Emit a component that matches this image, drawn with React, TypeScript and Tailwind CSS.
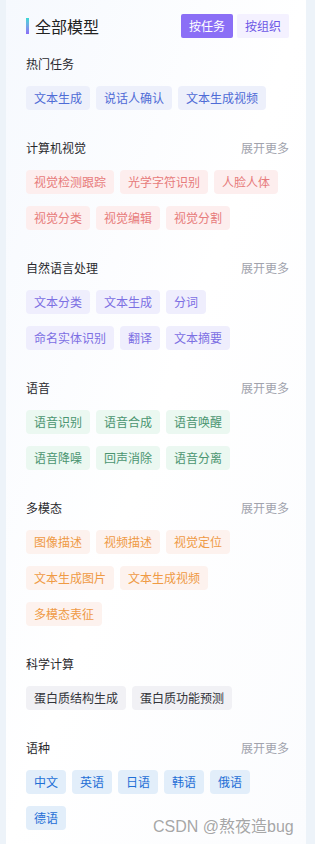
import React from 'react'

type Section = {
  title: string
  more?: boolean
  tone: string
  tags: string[]
}

// 분류별 태그 색상
const sections: Section[] = [
  { title: '热门任务', tone: 'bg-[#edf0fb] text-[#4f6bd6]', tags: ['文本生成', '说话人确认', '文本生成视频'] },
  {
    title: '计算机视觉',
    more: true,
    tone: 'bg-[#fdeeee] text-[#e77b7b]',
    tags: ['视觉检测跟踪', '光学字符识别', '人脸人体', '视觉分类', '视觉编辑', '视觉分割'],
  },
  {
    title: '自然语言处理',
    more: true,
    tone: 'bg-[#efeefd] text-[#7c6fe3]',
    tags: ['文本分类', '文本生成', '分词', '命名实体识别', '翻译', '文本摘要'],
  },
  {
    title: '语音',
    more: true,
    tone: 'bg-[#ebf8f1] text-[#4a9570]',
    tags: ['语音识别', '语音合成', '语音唤醒', '语音降噪', '回声消除', '语音分离'],
  },
  {
    title: '多模态',
    more: true,
    tone: 'bg-[#fdf2ee] text-[#ef9a45]',
    tags: ['图像描述', '视频描述', '视觉定位', '文本生成图片', '文本生成视频', '多模态表征'],
  },
  { title: '科学计算', tone: 'bg-[#f1f1f5] text-[#33343a]', tags: ['蛋白质结构生成', '蛋白质功能预测'] },
  {
    title: '语种',
    more: true,
    tone: 'bg-[#e2eefa] text-[#1f6fd6]',
    tags: ['中文', '英语', '日语', '韩语', '俄语', '德语'],
  },
]

export default function App() {
  return (
    <div
      className="relative min-h-[844px] bg-[#edf3f9]"
      style={{ fontFamily: '"Noto Sans CJK SC", "Noto Sans", sans-serif' }}
    >
      <div className="ml-[6px] min-h-[844px] w-[300px] bg-gradient-to-br from-[#f6f9fe] via-white to-[#fbfcfe] pb-4 pl-5 pr-[17px] pt-[14px]">
        {/* 헤더 */}
        <div className="flex h-6 items-center justify-between">
          <div className="flex items-center gap-[6px]">
            <span className="h-4 w-[3px] bg-gradient-to-b from-[#35d8d4] to-[#8a6cf7]" />
            <h1 className="text-base leading-6 text-[#222]">全部模型</h1>
          </div>
          <div className="flex gap-1">
            <button className="h-6 rounded-[2px] bg-[#8b6ff6] px-2 text-xs text-white">按任务</button>
            <button className="h-6 rounded-[2px] bg-[#f4f1ff] px-2 text-xs text-[#6d57e6]">按组织</button>
          </div>
        </div>

        {/* 섹션 목록 */}
        {sections.map((s, idx) => (
          <div key={s.title} className={idx === 0 ? 'mt-4' : 'mt-7'}>
            <div className="flex h-5 items-center justify-between text-xs">
              <span className="text-[#2a2a2e]">{s.title}</span>
              {s.more && <span className="text-[#a1a3ad]">展开更多</span>}
            </div>
            <div className="mt-3 flex flex-wrap gap-x-[6px] gap-y-3">
              {s.tags.map((t) => (
                <span key={t} className={`flex h-6 items-center rounded px-2 text-xs ${s.tone}`}>
                  {t}
                </span>
              ))}
            </div>
          </div>
        ))}
      </div>

      {/* 워터마크 */}
      <span
        className="absolute left-[153px] top-[815px] text-base text-[#8f8f8f]/80"
        style={{ fontFamily: '"Liberation Sans", "Noto Sans CJK SC", sans-serif' }}
      >
        CSDN @熬夜造bug
      </span>
    </div>
  )
}
